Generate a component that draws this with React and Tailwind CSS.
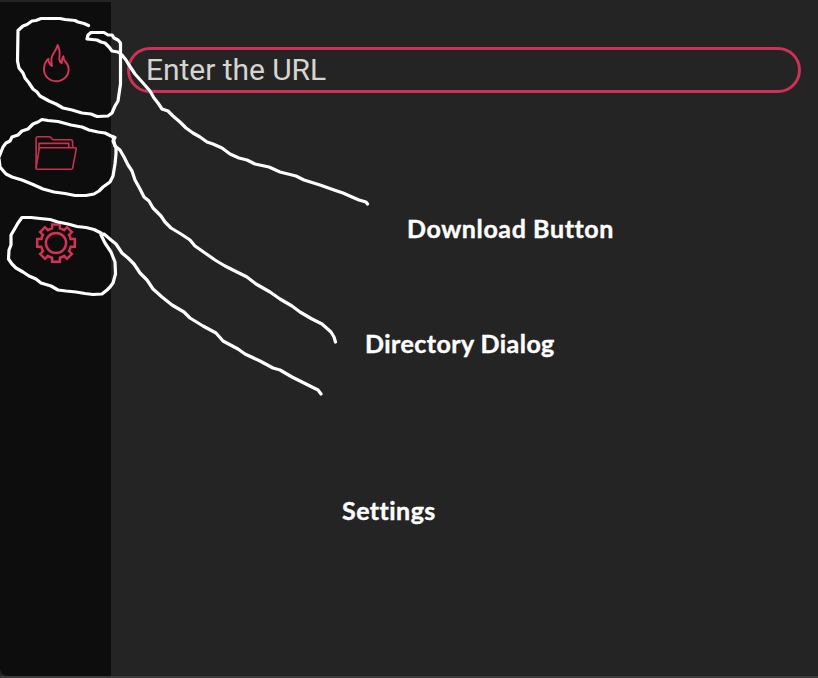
import React from 'react';

const FlameIcon = () => (
  <svg className="block h-10 w-10" viewBox="36 43 40 40" fill="none" stroke="#d93458" strokeWidth="1.9" strokeLinejoin="round">
    <path d="M57.6 45 C56.5 51 51.8 53.8 51.4 58.6 C51.2 61 51.6 63.5 52 66 C50 64.5 48.2 62 48.4 58.7 C45.5 61.3 44 65.3 44 69.2 C44 76.3 49.6 81.2 56.2 81.2 C63 81.2 68.6 76.2 68.6 69.4 C68.6 65.8 67.2 63.3 65 61.2 C64.2 60 63.4 58.5 63.4 56.2 C61.8 58 62.4 61 61.6 63.2 C59.6 61.8 59 59.8 59.4 57.4 C60 53 59.4 48.5 57.6 45 Z" />
  </svg>
);

const FolderIcon = () => (
  <svg className="block h-10 w-[42px]" viewBox="35 134 42 40" fill="none" stroke="#c8304f" strokeWidth="1.6" strokeLinejoin="round">
    <path d="M36.1 168 V138.4 Q36.1 136.8 37.8 136.8 H49.2 Q50.6 136.8 51.3 138.2 Q52 139.7 53.4 139.7 H70.6 Q72.6 139.7 72.6 141.8 V147.6" />
    <path d="M39 149.5 V143.4 H68.8 V147.6" />
    <path d="M40.7 147.7 H75 Q76.6 147.7 76.2 149.3 L72.7 167.8 Q72.4 169.3 70.8 169.3 H37.3 Q35.8 169.3 36.1 167.8 L39.1 149.2 Q39.4 147.7 40.7 147.7 Z" />
  </svg>
);

const GearIcon = () => (
  <svg className="block h-[42px] w-[42px]" viewBox="35 222 42 42" fill="none" stroke="#d33256" strokeWidth="2.5">
    <circle cx="56" cy="243" r="10.1" />
    <path d="M52.1 224.4 H59.9 V228.4 C61.5 228.8 62.9 229.4 64.2 230.2 L67 227.2 L71.9 232.1 L69 234.9 C69.8 236.2 70.3 237.6 70.7 239.1 H74.8 V246.8 H70.7 C70.3 248.4 69.8 249.8 69 251.1 L71.9 253.9 L67 258.8 L64.2 255.9 C62.9 256.7 61.5 257.3 59.9 257.7 V261.7 H52.1 V257.7 C50.6 257.3 49.2 256.7 47.9 255.9 L45 258.8 L40.1 253.9 L43 251.1 C42.2 249.8 41.7 248.4 41.3 246.8 H37.2 V239.1 H41.3 C41.7 237.6 42.2 236.2 43 234.9 L40.1 232.1 L45 227.2 L47.9 230.2 C49.2 229.4 50.6 228.8 52.1 228.4 Z" />
  </svg>
);

const strokes = [
  '88.5,25.5 84,23.5 78,22 75,20.5 65,19.5 60,18.5 41,18.5 36,20.5 32,21 27,24.5 23,26 18,30.5 17.5,61 19,68 23,73 25,78 29,83 33,89 37,92 40,96 49,101 56,104 63,108 72,110 82,113 91,114 97,116.5 108,116 112,113 115,106 118,101 119,94 120.5,84 120.5,43 118,40 114,38 112,35 108,35 104,32.5 91,32.5 88,35 87,39 97,40 101,42 105,43 109,47 112,51 118,52 122,55 126,60 129,65 135,74 143,83 150,91 154,98 158,103 162,109 168,111 173,116 180,122 186,128 193,133 200,137 207,142 213,144 222,148 230,154 239,158 247,160 255,164 269,167 280,172 296,176 304,180 320,185 334,190 343,193 352,197 359,200 366,202 367.5,204',
  '-1,157 1,152 3,147 6,143 10,141 12,137 18,135 22,131 28,129 33,124 38,122 42,119.5 48,120.5 58,121.5 71,125 82,127 89,130 98,132 105,133 111,136 115,137.5 113,141 116,148 116,154 115,164 113,176 110,182 103,187 99,191 94,194 86,195.5 75,195.5 65,193.5 54,192 43,189 33,184.5 22,180 12,177 6,174 0,167 -1,159',
  '113,137 115,146 120,150 124,157 128,165 132,171 135,180 140,189 144,197 149,201 153,208 161,216 165,222 171,228 181,234 190,240 195,246 205,253 215,260 225,266 237,272 247,277 256,284 270,292 280,299 292,306 300,312 312,319 322,324 331,332 334,337 335.5,342',
  '101,233 94,229.5 86,227.5 77,226.5 68,224 58,222 50,219.5 40,218.5 31,217.5 22,217.5 18,223 14,230 11,235 11,245 9,250 8.5,259 12,264 16,268 23,272 29,276 36,279 41,283 51,286 58,290 66,291 76,292 85,293.5 93,294.5 102,294 107,290 110,287 113,283 115.5,274 115,262 111,252 105,243 101,235 104,234 111,240 116,244 122,253 128,258 134,264 140,273 147,280 153,289 162,297 172,305 184,312 190,318 203,326 216,333 223,341 238,349 245,354 260,361 273,368 280,370 292,377 304,383 312,387 318,390 321,394',
];

export default function App() {
  return (
    <div className="relative flex h-[678px] w-[818px] flex-col overflow-hidden bg-[#242424] pt-0.5">
      <div className="flex h-[674px] flex-none">
        <aside className="flex w-[111px] flex-none flex-col items-center rounded-bl-lg bg-[#0d0d0d] pt-[41px]">
          <button className="block" aria-label="Download"><FlameIcon /></button>
          <button className="mt-[51px] block" aria-label="Directory"><FolderIcon /></button>
          <button className="mt-12 block" aria-label="Settings"><GearIcon /></button>
        </aside>
        <main className="flex flex-1 flex-col pl-4 pr-[17px] pt-[45px] font-['Lato',sans-serif] text-[25px] font-bold leading-8 tracking-[0.6px] text-white [-webkit-text-stroke:0.4px_white]">
          <input
            className="h-[46px] w-full rounded-[23px] border-[3px] border-[#cf3055] bg-transparent pb-0.5 pl-4 font-['Roboto',sans-serif] text-[30px] font-normal tracking-[-0.05px] text-[#d5d5d0] outline-none [-webkit-text-stroke:0] placeholder:text-[#d5d5d0]"
            placeholder="Enter the URL"
          />
          <p className="ml-[280px] mt-[119px] whitespace-nowrap">Download Button</p>
          <p className="ml-[238px] mt-[83px] whitespace-nowrap tracking-[0.45px]">Directory Dialog</p>
          <p className="ml-[215px] mt-[135px] whitespace-nowrap tracking-[0.45px]">Settings</p>
        </main>
      </div>
      <div className="h-0.5 flex-none bg-[#3b3b3b]" />
      <svg className="pointer-events-none absolute inset-0 h-full w-full" viewBox="0 0 818 678" fill="none" stroke="#fff" strokeWidth="3.2" strokeLinejoin="round" strokeLinecap="round">
        {strokes.map((points) => <polyline key={points} points={points} />)}
      </svg>
    </div>
  );
}
